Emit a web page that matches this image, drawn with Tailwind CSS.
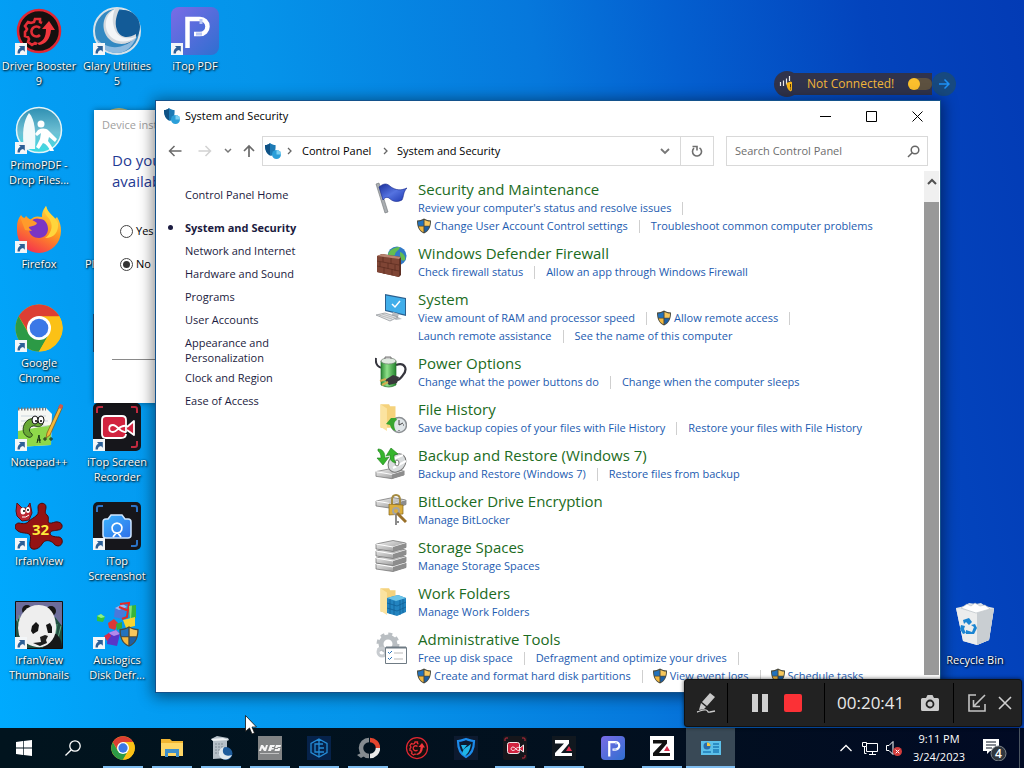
<!DOCTYPE html>
<html lang="en">
<head>
<meta charset="utf-8">
<title>System and Security</title>
<script src="https://cdn.jsdelivr.net/npm/@tailwindcss/browser@4"></script>
</head>
<body class="relative h-screen overflow-hidden bg-[linear-gradient(80deg,#00abff_0%,#039df3_13%,#0594ea_33%,#0678dc_57%,#0460d0_69%,#0344bd_86%,#033bb5_100%)] font-['Open_Sans','Noto_Sans',sans-serif] text-[11px] text-black select-none">

<svg width="0" height="0" class="absolute" aria-hidden="true">
  <defs>
    <linearGradient id="gp" x1="0" y1="0" x2="1" y2="1"><stop offset="0" stop-color="#7a6be6"/><stop offset="1" stop-color="#2f6fd0"/></linearGradient>
    <linearGradient id="gff" x1=".8" y1="0" x2=".3" y2="1"><stop offset="0" stop-color="#ffe14a"/><stop offset=".45" stop-color="#ff9a1f"/><stop offset="1" stop-color="#f5304f"/></linearGradient>
    <linearGradient id="gprimo" x1="0" y1="0" x2="0" y2="1"><stop offset="0" stop-color="#2e8fb2"/><stop offset=".55" stop-color="#6fc0d4"/><stop offset="1" stop-color="#37dce4"/></linearGradient>
    <linearGradient id="gmetal" x1="0" y1="0" x2="1" y2="1"><stop offset="0" stop-color="#f4f4f4"/><stop offset="1" stop-color="#8b8b8b"/></linearGradient>
    <linearGradient id="gflag" x1="0" y1="0" x2="1" y2="1"><stop offset="0" stop-color="#1a2f9a"/><stop offset=".5" stop-color="#5573e0"/><stop offset="1" stop-color="#1c37b0"/></linearGradient>
    <linearGradient id="gbat" x1="0" y1="0" x2="1" y2="0"><stop offset="0" stop-color="#2c8a34"/><stop offset=".4" stop-color="#8fe08a"/><stop offset="1" stop-color="#23852c"/></linearGradient>
    <linearGradient id="gcam" x1="0" y1="0" x2="1" y2="1"><stop offset="0" stop-color="#3ab4ff"/><stop offset="1" stop-color="#2f6fe8"/></linearGradient>
    <symbol id="shortcut" viewBox="0 0 12 12"><path d="M0 0h12v12H0z" fill="#f3f6f8"/><path d="M2.500 10.500c0-3.500 1-5 3-5.800L4 3h5.800v5.800L8 7C6 7.300 5 8.500 4.800 10.500z" fill="#2c5f96"/></symbol>
    <symbol id="shield" viewBox="0 0 16 16"><path d="M8 .5C6 1.800 3.500 2.500 1 2.500c0 6 1.500 10.500 7 13 5.500-2.500 7-7 7-13-2.500 0-5-.7-7-2z" fill="#4a4a3c"/><path d="M7.500 1.900C6 2.800 4 3.400 2 3.500c0 1.600.1 3 .5 4.300h5z" fill="#2272bd"/><path d="M8.500 1.900c1.500.9 3.500 1.500 5.500 1.600 0 1.600-.1 3-.5 4.300h-5z" fill="#f7c75c"/><path d="M2.700 8.500c.7 2.600 2.200 4.500 4.800 5.800V8.500z" fill="#f3b83f"/><path d="M13.300 8.500c-.7 2.600-2.200 4.500-4.800 5.800V8.500z" fill="#1c5fa6"/></symbol>
    <symbol id="chrome" viewBox="0 0 48 48"><circle cx="24" cy="24" r="23.500" fill="#fbc116"/><path d="M24 24 3.650 12.250A23.500 23.500 0 0 1 44.350 12.250z" fill="#dc3f33"/><path d="M24 12.200h20.400L40 9 24 .5 3.650 12.250 14 29z" fill="#dc3f33"/><path d="M3.650 12.250A23.500 23.500 0 0 0 24 47.500L34 30 24 24 13.800 29.800z" fill="#2c9a46"/><path d="M24 47.500A23.500 23.500 0 0 0 44.400 12.200H24L34.200 30z" fill="#fbc116"/><circle cx="24" cy="24" r="12" fill="#fff"/><circle cx="24" cy="24" r="9.300" fill="#3b78e7"/></symbol>
    <symbol id="gear" viewBox="0 0 48 48"><circle cx="24" cy="24" r="21" fill="#15100f" stroke="#e02733" stroke-width="2.500"/><path d="M27 16l-2-1 0-3h-5l-1 3-3 1-3-1-3 4 2 3-1 2-1 1v4l3 1 1 2-1 3 4 3 3-2 2 1" fill="none" stroke="#e32d36" stroke-width="2.600"/><path d="M25 21a5 5 0 1 0 0 7" fill="none" stroke="#e32d36" stroke-width="2.600"/><path d="M22 36c6-1 9-6 9-14h-4l7-8 6 9h-4c-1 9-5 14-12 15z" fill="#f2363d"/></symbol>
    <symbol id="pdf" viewBox="0 0 48 48"><rect width="48" height="48" rx="8" fill="url(#gp)"/><path d="M16.500 41V12H29a7.500 7.500 0 0 1 0 15H23" fill="none" stroke="#fff" stroke-width="4.500"/><path d="M31 27h-6M30 12v5" stroke="#b9c8f4" stroke-width="3"/></symbol>
    <symbol id="camrec" viewBox="0 0 48 48"><rect width="48" height="48" rx="5" fill="#16161b"/><path d="M4 10V6q0-2 2-2h4M38 4h4q2 0 2 2v4M44 38v4q0 2-2 2h-4" fill="none" stroke="#c32b40" stroke-width="2"/><path d="m34 24 7-6v14l-7-5" fill="#d2233f" stroke="#fff" stroke-width="1.800" stroke-linejoin="round"/><path d="M33 29.500V17q0-4-4-4H13q-4 0-4 4v14q0 4 4 4h15q5 0 5-4" fill="#d2233f" stroke="#fff" stroke-width="1.800"/><path d="M33 29c-7 1-8-7-13-7-5 0-5 7 0 7s6-8 14-6" fill="none" stroke="#fff" stroke-width="1.800"/></symbol>
    <symbol id="sec" viewBox="0 0 16 16"><path d="M0 2c2 0 4-.5 5-2 2 1.500 3.500 2 5.500 2 .5 5-1 9-4.500 11C2 11 0 8 0 2z" fill="#1c7ab5"/><path d="M0 2c2 0 4-.5 5-2v12.500C2 11 0 8 0 2z" fill="#0f5285"/><circle cx="11.500" cy="11.500" r="4.500" fill="#2b9fd9"/><path d="M11.500 7v4.500H16A4.500 4.500 0 0 0 11.500 7z" fill="#7bd0f2"/></symbol>
    <symbol id="drive" viewBox="0 0 32 12"><path d="M1 4 18 .5l13 2.500v4.500L18 11.500 1 9z" fill="url(#gmetal)" stroke="#6b6b6b" stroke-width=".7"/><path d="m1 4 17 3 13-4" fill="none" stroke="#fff"/><path d="M18 7v4.500l13-4V3z" fill="#8d8d8d"/></symbol>
    <symbol id="folder" viewBox="0 0 18 28"><path d="M2 2h8l1 2h5v20H2z" fill="#f5d27c"/><path d="m2 2 6 4v21l-6-4z" fill="#fbe3a0"/></symbol>
    <symbol id="zlogo" viewBox="0 0 24 24"><path d="M3 4h14v3.500L9 17h11v3H3v-3l9-9.500H3z" fill="currentColor"/><path d="m14 15 3-5 3 5z" fill="#d92d4b"/></symbol>
  </defs>
</svg>

<!-- Desktop shortcuts -->
<main class="grid w-max auto-cols-[78px] grid-flow-col grid-rows-[repeat(7,99px)] pt-[7px] text-center leading-[15px] text-white [&_span]:[text-shadow:1px_1px_2px_#000,0_0_2px_#000a]">
  <button class="flex flex-col items-center gap-[3px]">
    <svg class="size-12" viewBox="0 0 48 48"><use href="#gear" width="48" height="48"/><use href="#shortcut" y="36" width="12" height="12"/></svg>
    <span class="whitespace-nowrap">Driver Booster<br>9</span></button>
  <button class="flex flex-col items-center gap-[3px]">
    <svg class="size-12" viewBox="0 0 48 48"><circle cx="24" cy="24" r="22.500" fill="url(#gprimo)" stroke="#e3f4f8" stroke-width="1.500"/><path d="M14 7c6 6 7 20 6 36H9C7 28 8 15 14 7z" fill="#f2fafb"/><circle cx="26" cy="18" r="3.500" fill="#fff"/><path d="M23 24c4-2 8-2 11 1l8 8-2 3-6-5-1 4c3 4 5 7 6 10h-4c-1-4-4-7-7-8l-4 6-3-2 4-8 1-6-4 3-2-2z" fill="#fff"/><use href="#shortcut" y="36" width="12" height="12"/></svg>
    <span class="whitespace-nowrap">PrimoPDF -<br>Drop Files...</span></button>
  <button class="flex flex-col items-center gap-[3px]">
    <svg class="size-12" viewBox="0 0 48 48"><path d="M2 22c0-5 1-8 4-12l3 4 2-3 4 4c4-4 7-4 12-3 0-5 1-7 4-11 1 6 5 8 8 14l3-3c3 5 4 9 4 14a22 22 0 0 1-44 0z" fill="url(#gff)"/><path d="M14 24c0-8 5-12 11-10 5 0 8 5 8 10s-4 9-9 9-10-3-10-9z" fill="#7a35c4"/><path d="M5 12c6 1 10 1 17 6-1 3-5 3-9 4l4 4-7-1z" fill="#ff9b2b"/><path d="M31 1c-4 7 1 9 4 14 4 7 0 15-5 18 9 0 14-6 13-15-2-6-10-9-12-17z" fill="#ffd53c"/><use href="#shortcut" y="36" width="12" height="12"/></svg>
    <span>Firefox</span></button>
  <button class="flex flex-col items-center gap-[3px]">
    <svg class="size-12" viewBox="0 0 48 48"><use href="#chrome" width="48" height="48"/><use href="#shortcut" y="36" width="12" height="12"/></svg>
    <span>Google<br>Chrome</span></button>
  <button class="flex flex-col items-center gap-[3px]">
    <svg class="size-12" viewBox="0 0 48 48"><path d="m3 6 28-1 6 6-1 31-33 2z" fill="#f7f8f4"/><path d="m3 28 33-6v20L3 44z" fill="#8ed84a"/><path d="M3 6h28" stroke="#777" stroke-width="3" stroke-dasharray="1.500 1.500"/><path d="M6 13h25M6 18h27M6 23h27" stroke="#b7c7d4" stroke-width=".7"/><path d="M28 21c-2-5-10-7-15-4-6 4-7 14 0 17 3 1 5-1 4-3-5-3-2-9 3-8 3 1 6 1 8-2z" fill="#69a936" stroke="#26431a"/><ellipse cx="20" cy="17" rx="3" ry="4" fill="#fff" stroke="#111"/><ellipse cx="26" cy="17" rx="3" ry="4" fill="#fff" stroke="#111"/><circle cx="21" cy="18" r="1"/><circle cx="26" cy="18" r="1"/><path d="m22 40 2-8 1 8m-3-3h4m2-1h4m-2-2v4m4-2h4m-2-2v4" fill="none" stroke="#153018"/><path d="m45 2 3 1-13 29-4 3 1-5z" fill="#f1b93c" stroke="#815014" stroke-width=".7"/><path d="m43 5 4 1 1-4-3-1z" fill="#cc5a52"/><use href="#shortcut" y="36" width="12" height="12"/></svg>
    <span>Notepad++</span></button>
  <button class="flex flex-col items-center gap-[3px]">
    <svg class="size-12" viewBox="0 0 48 48"><path d="M22 13c2-2 1-5 1-8 0-5 8-5 8 0 0 3-2 6 1 8 3 3 0 6 2 8 3 1 6-2 9-1 6 1 5 8 0 8-3 1-7 0-8 3 0 3 4 4 9 4 5 1 4 9-1 9-4 0-4-4-8-5s-6 0-8 3c-2 4-8 7-11 4-3-4 1-9-1-13-2-3-8-1-12-4-5-3-3-8 1-8 4 1 8 1 10-2 2-2 5-3 8-6z" fill="#941313" stroke="#4c0808"/><path d="m2 1 5 5 5 0 3-5 2 10-3 7-7 1-5-5-1-5z" fill="#bb2430" stroke="#5e1013"/><ellipse cx="8" cy="9" rx="2.500" ry="3.500" fill="#fff"/><ellipse cx="13" cy="8" rx="2" ry="3" fill="#fff"/><circle cx="9" cy="9" r="1"/><circle cx="13" cy="8" r="1"/><path d="M7 15q4 1 7-2" stroke="#fff" fill="none"/><text x="17" y="33" font-size="15" font-weight="700" fill="#ffec3b" font-family="Open Sans">32</text><use href="#shortcut" y="36" width="12" height="12"/></svg>
    <span>IrfanView</span></button>
  <button class="flex flex-col items-center gap-[3px]">
    <svg class="size-12" viewBox="0 0 48 48"><path d="M.5.500h47v47H.5z" fill="#6d6d9b" stroke="#111"/><path d="M1 20 8 14l6 6 26-4 7 9v22H1z" fill="#1f4d40"/><path d="m2 18 5 13M4 14l3 20M42 23l-3 20M46 25l-5 20" stroke="#66a886"/><circle cx="12" cy="9" r="5" fill="#171717"/><circle cx="36" cy="10" r="5" fill="#171717"/><path d="M30 34c7-6 17-1 17 13H28z" fill="#16181a"/><path d="M3 27C4 12 12 4 24 4c11 0 16 9 17 20 1 12-6 20-14 22-9 1-20-4-23-12z" fill="#eee"/><path d="m17 25 4-4 3 3-1 6-5 3-2-3zM31 24l4-2 2 4 0 6-4 0z" fill="#141414"/><path d="m25 36 5-2 3 1-2 4 1 3-7 3-7-3 8-1z" fill="#1e1e1e"/><use href="#shortcut" y="36" width="12" height="12"/></svg>
    <span>IrfanView<br>Thumbnails</span></button>

  <button class="flex flex-col items-center gap-[3px]">
    <svg class="size-12" viewBox="0 0 48 48"><circle cx="24" cy="24" r="23" fill="#3389c2" stroke="#d7e2e9" stroke-width="2"/><circle cx="30" cy="20" r="17" fill="#135b97"/><path d="M3 31c10 12 28 13 41-2-5 12-12 17-20 17S7 42 3 31z" fill="#8fbbe0"/><path d="M27 1C12 2 8 16 12 26c5 12 20 15 31 5l0-4c-8 5-16 4-19-4-3-8 0-16 3-22z" fill="#d4d9de"/><path d="M22 2C10 9 11 23 18 30c7 6 17 6 25 0-9 3-18 1-21-7-3-7-3-14 0-21z" fill="#f4f6f8"/><use href="#shortcut" y="36" width="12" height="12"/></svg>
    <span class="whitespace-nowrap">Glary Utilities<br>5</span></button>
  <span class="flex flex-col items-center"><svg class="size-12" viewBox="0 0 48 48"><circle cx="26" cy="22" r="20" fill="#b8b87a"/></svg></span>
  <button class="flex flex-col items-start pl-[7px] pt-[51px]"><span>Pl</span></button>
  <span class="flex flex-col items-center"><svg class="size-12" viewBox="0 0 48 48"><path d="M0 10h48v38H0z" fill="#1b4f7d"/></svg></span>
  <button class="flex flex-col items-center gap-[3px]">
    <svg class="size-12" viewBox="0 0 48 48"><use href="#camrec" width="48" height="48"/><use href="#shortcut" y="36" width="12" height="12"/></svg>
    <span>iTop Screen<br>Recorder</span></button>
  <button class="flex flex-col items-center gap-[3px]">
    <svg class="size-12" viewBox="0 0 48 48"><rect width="48" height="48" rx="5" fill="#16161b"/><path d="M4 10V6q0-2 2-2h4M38 4h4q2 0 2 2v4M44 38v4q0 2-2 2h-4" fill="none" stroke="#2c74c8" stroke-width="2"/><path d="M15 17l3-4h11l3 4h3q3 0 3 3v13q0 3-3 3H13q-3 0-3-3V20q0-3 3-3z" fill="url(#gcam)" stroke="#cfe6ff" stroke-width="1.500"/><path d="m20 35 3-4a5 5 0 1 1 2 0l3 4" fill="none" stroke="#fff" stroke-width="1.800"/><use href="#shortcut" y="36" width="12" height="12"/></svg>
    <span>iTop<br>Screenshot</span></button>
  <button class="flex flex-col items-center gap-[3px]">
    <svg class="size-12" viewBox="0 0 48 48"><path d="m4 15 4-2 4 3-2 5-6-1z" fill="#35c43b"/><path d="m4 15 4-2 4 3-4 1z" fill="#8ff08a"/><path d="m22 7 8-4 4 3-4 12-9-2z" fill="#4a79d9"/><path d="m22 7 8-4 4 3-8 3z" fill="#9ab8f5"/><path d="m27 3 9-1-2 14-5 2M26 6l10 4" fill="none" stroke="#e02a2a" stroke-width="2"/><path d="m36 5 7-1v13l-6 2z" fill="#38b53a"/><path d="m36 5 3-.5-1 14-1 .5z" fill="#7fe077"/><path d="m30 19 12-3v9l-9 2z" fill="#f6d631"/><path d="m15 22 6-4 4 4-3 7-6-2z" fill="#dc3836"/><path d="m23 23 6-2 0 6-5 2z" fill="#39a939"/><path d="m15 32 8-3 4 4-3 12-10-2z" fill="#5a35c8"/><path d="m15 32 8-3 4 4-6 2z" fill="#b28aec"/><path d="m11 35 5-3 2 3-4 5z" fill="#d82b48"/><use href="#shield" x="25" y="24" width="22" height="23"/><use href="#shortcut" y="36" width="12" height="12"/></svg>
    <span class="whitespace-nowrap">Auslogics<br>Disk Defr...</span></button>

  <button class="flex flex-col items-center gap-[3px]">
    <svg class="size-12" viewBox="0 0 48 48"><use href="#pdf" width="48" height="48"/><use href="#shortcut" y="36" width="12" height="12"/></svg>
    <span>iTop PDF</span></button>
</main>
<button class="absolute right-[10px] top-[601px] flex w-[78px] flex-col items-center gap-[3px] leading-[15px] whitespace-nowrap text-white [text-shadow:1px_1px_2px_#000,0_0_2px_#000a]">
  <svg class="size-12" viewBox="0 0 48 48"><path d="m5 7 9-2 4-3 7 1 5-1 4 3 9 2-5 32-12 5-14-4z" fill="#dfe4e8"/><path d="m5 7 20 5 18-5-5 32-12 5-14-4z" fill="#eceded"/><path d="m26 12 17-5-5 32-12 5z" fill="#c9ced2"/><path d="m10 7 6-4 4 2 4-3 5 3 5-1 5 4-14 4z" fill="#fff" stroke="#b4bac0" stroke-width=".6"/><g fill="#1b85d2"><path d="m12 19 6-2 3 4-3 3-3-3-2 2z"/><path d="m10 24 4 1-1 3 2 4-3 1-3-5z"/><path d="m15 29 6 2 2-5-3-2 4-1 2 4-3 6-8 0z"/></g></svg>
  <span>Recycle Bin</span>
</button>

<!-- Background dialog -->
<section class="absolute left-[94px] top-[110px] h-[293px] w-[110px] bg-white whitespace-nowrap shadow-[0_0_6px_#0006]">
  <h2 class="pl-2 pt-[7px] leading-4 text-[#a0a0a0]">Device inst</h2>
  <p class="pl-[18px] pt-[17px] text-[15px] leading-[21px] text-[#1f3a93]">Do you<br>available</p>
  <div class="flex flex-col gap-[17px] pl-[26px] pt-[31px] leading-4">
    <label class="flex items-center gap-[3px]"><input type="radio" name="dl" class="size-[13px] appearance-none rounded-full border border-[#444] bg-white">Yes</label>
    <label class="flex items-center gap-[3px]"><input type="radio" name="dl" checked class="size-[13px] appearance-none rounded-full border border-[#444] bg-[#333] bg-clip-content p-[2px]">No</label>
  </div>
  <hr class="ml-[18px] mt-[87px] border-[#8a8a8a]">
</section>

<!-- VPN status pill -->
<aside class="absolute right-[68px] top-[71px] flex h-[26px] w-[182px] items-center text-xs text-[#f2b63a]">
  <span class="flex size-[26px] items-center justify-center rounded-full bg-[#30334c]"><svg class="size-4" viewBox="0 0 16 16"><path d="M1.500 6v4M4.500 4.500v5.500M7.500 2.500v6M10.500 0v5" stroke="#e8e8e8" stroke-width="1.200"/><path d="m11.500 5.500 4 1.500c0 4-1 6.500-4 8.500-3-2-4-4.500-4-8.500z" fill="#f7b418"/><path d="M11.500 8v3.500m0 1v1" stroke="#5a3c00"/></svg></span>
  <div class="-ml-2 flex h-[22px] flex-1 items-center justify-between bg-[#30334c] pl-[15px]"><span class="whitespace-nowrap">Not Connected!</span>
  <button role="switch" aria-checked="false" aria-label="VPN" class="flex h-3 w-6 items-center rounded-full bg-[#5d5140]"><span class="size-3 rounded-full bg-[#fbc02d]"></span></button></div>
  <button aria-label="Expand" class="flex size-[24px] items-center justify-center rounded-full bg-[#17497f]"><svg class="size-3" viewBox="0 0 12 12" fill="none" stroke="#1e90f5" stroke-width="1.500"><path d="M1 6h10M6.500 1.500 11 6l-4.500 4.500"/></svg></button>
</aside>

<!-- Control Panel window -->
<section class="absolute left-[155px] right-[83px] top-[100px] flex h-[593px] flex-col border border-[#14528c] bg-white shadow-[0_2px_14px_2px_#0007]">
  <header class="flex h-[30px] shrink-0 items-center pl-2">
    <svg class="size-4"><use href="#sec"/></svg><h1 class="pl-[5px]">System and Security</h1>
    <div class="ml-auto flex h-[28px]">
      <button aria-label="Minimize" class="flex w-[46px] items-center justify-center"><svg class="h-[11px] w-[11px]" viewBox="0 0 11 11"><path d="M0 5.500h11" stroke="#000"/></svg></button>
      <button aria-label="Maximize" class="flex w-[46px] items-center justify-center"><svg class="h-[11px] w-[11px]" viewBox="0 0 11 11"><path d="M.5.500h10v10H.5z" fill="none" stroke="#000"/></svg></button>
      <button aria-label="Close" class="flex w-[46px] items-center justify-center"><svg class="h-[11px] w-[11px]" viewBox="0 0 11 11"><path d="m.5.500 10 10m0-10-10 10" stroke="#000"/></svg></button>
    </div>
  </header>
  <nav class="flex h-10 shrink-0 items-center pr-3">
    <div class="flex w-[106px] items-center pl-[12px]">
      <button aria-label="Back"><svg class="h-4 w-[14px]" viewBox="0 0 14 16" fill="none" stroke="#6a6a6a" stroke-width="1.500"><path d="M13.500 8H1.500M6.500 3l-5 5 5 5"/></svg></button>
      <button aria-label="Forward" class="ml-[16px]"><svg class="h-4 w-[14px]" viewBox="0 0 14 16" fill="none" stroke="#d2d2d2" stroke-width="1.500"><path d="M.5 8h12M7.500 3l5 5-5 5"/></svg></button>
      <button aria-label="Recent" class="ml-[12px]"><svg class="h-4 w-2" viewBox="0 0 8 16" fill="none" stroke="#777" stroke-width="1.500"><path d="m1 6 3 3 3-3"/></svg></button>
      <button aria-label="Up" class="ml-[11px]"><svg class="h-4 w-3" viewBox="0 0 12 16" fill="none" stroke="#6a6a6a" stroke-width="1.700"><path d="M6 14V3M1 8l5-5 5 5"/></svg></button>
    </div>
    <div class="flex h-[30px] flex-1 items-center border border-[#d9d9d9] pl-[2px] whitespace-nowrap">
      <svg class="size-4"><use href="#sec"/></svg>
      <svg class="ml-[6px] h-2 w-[6px]" viewBox="0 0 6 8" fill="none" stroke="#666" stroke-width="1.300"><path d="m1 1 3 3-3 3"/></svg>
      <a href="#" class="ml-[9px] w-[72px]">Control Panel</a>
      <svg class="ml-[9px] h-2 w-[6px]" viewBox="0 0 6 8" fill="none" stroke="#666" stroke-width="1.300"><path d="m1 1 3 3-3 3"/></svg>
      <a href="#" class="ml-[8px]">System and Security</a>
      <button aria-label="Previous locations" class="ml-auto mr-[10px]"><svg class="h-4 w-[10px]" viewBox="0 0 10 16" fill="none" stroke="#777" stroke-width="1.800"><path d="m1 6 4 4 4-4"/></svg></button>
      <button aria-label="Refresh" class="flex h-full w-[33px] items-center justify-center border-l border-[#d9d9d9]"><svg class="size-3" viewBox="0 0 12 12" fill="none" stroke="#6f6f6f" stroke-width="1.600"><path d="M8.500 2.800A4.500 4.500 0 1 1 3 3.200M1.500 1.500H6v4"/></svg></button>
    </div>
    <div class="ml-3 flex h-[30px] w-[202px] items-center border border-[#d9d9d9] pl-2 pr-[7px]">
      <input type="search" aria-label="Search Control Panel" placeholder="Search Control Panel" class="min-w-0 flex-1 outline-none placeholder:text-[#6d6d6d]">
      <svg class="size-[13px]" viewBox="0 0 13 13" fill="none" stroke="#666" stroke-width="1.500"><circle cx="8" cy="5" r="3.800"/><path d="M5.200 7.800 1 12"/></svg>
    </div>
  </nav>
  <div class="flex min-h-0 flex-1">
    <aside class="flex w-[219px] shrink-0 flex-col items-start gap-2 pl-[29px] pt-4 leading-[15px] text-[#1b1b40]">
      <a href="#">Control Panel Home</a>
      <a href="#" class="-ml-[17px] mt-[10px] flex items-center gap-[12px] font-bold whitespace-nowrap"><span class="size-[5px] rounded-full bg-[#1b1b40]"></span>System and Security</a>
      <a href="#">Network and Internet</a>
      <a href="#">Hardware and Sound</a>
      <a href="#">Programs</a>
      <a href="#">User Accounts</a>
      <a href="#">Appearance and<br>Personalization</a>
      <a href="#" class="-mt-[3px]">Clock and Region</a>
      <a href="#">Ease of Access</a>
    </aside>
    <div class="flex min-w-0 flex-1 flex-col gap-[10px] overflow-hidden pt-[10px] leading-[18px] whitespace-nowrap text-[#1c5bb0] [&_h2]:pb-[2px] [&_h2]:text-[15px] [&_h2]:leading-4 [&_h2]:text-[#1c6b22] [&_i]:mx-[11px] [&_i]:h-[13px] [&_i]:w-px [&_i]:bg-[#cfcfcf] [&_p]:flex [&_p]:items-center [&>article]:flex [&>article]:gap-[11px] [&>article>svg]:mt-px [&>article>svg]:size-8 [&>article>svg]:shrink-0">
      <article>
        <svg viewBox="0 0 32 32"><path d="m1 2 3-1 9 29-3 1z" fill="#a9adb1" stroke="#6e7377" stroke-width=".6"/><path d="M4 5c5-4 8-4 12 0 5 3 9 4 16 1-4 4-3 8-5 12-6 3-10 1-13-2-2-1-4-1-6 2z" fill="url(#gflag)" stroke="#14258a" stroke-width=".6"/></svg>
        <div><h2>Security and Maintenance</h2>
        <p><a href="#">Review your computer's status and resolve issues</a><i></i></p>
        <p><svg class="-ml-[2px] mr-[2px] size-4"><use href="#shield"/></svg><a href="#">Change User Account Control settings</a><i></i><a href="#">Troubleshoot common computer problems</a></p></div>
      </article>
      <article>
        <svg viewBox="0 0 32 32"><circle cx="22" cy="10" r="9.500" fill="#3179c7"/><path d="M14 6c3-4 8-5 11-5-1 4-5 4-5 8-3 2-6 1-7-1zM25 6c3 1 6 4 5 8-4 2-5-2-5-8z" fill="#63bd50"/><path d="m2 10 5-2 19 3v18l-2 2-22-5z" fill="#5e3024"/><path d="m2 10 22 3v18L2 26z" fill="#7f4535"/><path d="m2 15 22 4M2 20l22 5M8 11v5m8-4v6M5 16v5m8-4v6m7-4v6M9 21v7m8-5v6" stroke="#5e2f22" stroke-width=".8"/><path d="m2 10 5-2 19 3-2 2z" fill="#b98470"/></svg>
        <div><h2>Windows Defender Firewall</h2>
        <p><a href="#">Check firewall status</a><i></i><a href="#">Allow an app through Windows Firewall</a></p></div>
      </article>
      <article>
        <svg viewBox="0 0 32 32"><path d="m10 2 21 4v18l-21-5z" fill="#2b5f8e"/><path d="m11 3.500 19 3.500v15.500l-19-4.500z" fill="#41aeea"/><path d="m17 12 3 3 5-6" stroke="#fff" stroke-width="1.500" fill="none"/><path d="m18 20 6 2-1 3 4 2-6 1-5-3z" fill="#b8bcc0"/><path d="m1 23 9-2 13 4-8 4z" fill="#e2e4e6" stroke="#8b8f93" stroke-width=".7"/><path d="m4 23 13 4m-10-5 13 4" stroke="#aaa" stroke-width=".7"/></svg>
        <div><h2>System</h2>
        <p><a href="#">View amount of RAM and processor speed</a><i></i><svg class="-ml-[2px] mr-[2px] size-4"><use href="#shield"/></svg><a href="#">Allow remote access</a><i></i></p>
        <p><a href="#">Launch remote assistance</a><i></i><a href="#">See the name of this computer</a></p></div>
      </article>
      <article>
        <svg viewBox="0 0 32 32"><path d="M1 2c-1 7 3 10 7 10" fill="none" stroke="#35353d" stroke-width="2"/><path d="M21 9c9-3 12 4 7 10-2 3-3 5-8 6" fill="none" stroke="#35353d" stroke-width="2.200"/><path d="M6 5h15v24q-7 4-15 0z" fill="url(#gbat)" stroke="#256e2b" stroke-width=".7"/><ellipse cx="13.500" cy="5" rx="7.500" ry="3" fill="#dfe9df" stroke="#718071" stroke-width=".7"/><path d="M10 3V1h6v2" fill="#ccc" stroke="#777"/><path d="m10 24 8-5 6 2-2 6-8 2z" fill="#39393b"/><path d="m5 25 6-2m-4 6 6-3" stroke="#d6ad51" stroke-width="2"/></svg>
        <div><h2>Power Options</h2>
        <p><a href="#">Change what the power buttons do</a><i></i><a href="#">Change when the computer sleeps</a></p></div>
      </article>
      <article>
        <svg viewBox="0 0 32 32"><use href="#folder" x="3" width="20" height="30"/><circle cx="24" cy="23" r="7.500" fill="#dfe5e8" stroke="#8b8f93" stroke-width="1.500"/><path d="M24 18v5l4-2M18 23h1m9 0h1m-5 5v1" stroke="#444" fill="none"/><path d="m11 22 5-6 5 0 1 2c-3 1-4 6-1 11-4-1-5-3-6-6z" fill="#38a52f"/></svg>
        <div><h2>File History</h2>
        <p><a href="#">Save backup copies of your files with File History</a><i></i><a href="#">Restore your files with File History</a></p></div>
      </article>
      <article>
        <svg viewBox="0 0 32 32"><use href="#drive" y="19" width="30" height="13"/><ellipse cx="22" cy="15" rx="8" ry="10" transform="rotate(42 22 15)" fill="#d9dcdd" stroke="#777"/><path d="m16 12 12-5M18 20l13-7" stroke="#fff" stroke-width="2"/><ellipse cx="22" cy="15" rx="2" ry="3" fill="#fff" stroke="#777"/><path d="M3 1c5 0 7 4 7 9l4-1-6 8-6-7h4C6 7 5 4 3 3zM16 0l7 6-4 1c0 3 0 6 2 8-5-1-6-3-6-8l-4 1z" fill="#35b52c" stroke="#1d7d1b" stroke-width=".6"/></svg>
        <div><h2>Backup and Restore (Windows 7)</h2>
        <p><a href="#">Backup and Restore (Windows 7)</a><i></i><a href="#">Restore files from backup</a></p></div>
      </article>
      <article>
        <svg viewBox="0 0 32 32"><use href="#drive" y="2" width="32" height="14"/><path d="M17 11V6q0-5 4-5t4 5v5" fill="none" stroke="#a58b42" stroke-width="2"/><path d="m14 10 14 1v9l-14 1z" fill="#dcae3c" stroke="#82641d" stroke-width=".7"/><circle cx="21" cy="17" r="3" fill="none" stroke="#a4a4a4" stroke-width="2"/><path d="M21 20v11m0-3h3" stroke="#8c8c8c" stroke-width="2"/><path d="m22 19 9 9" stroke="#997029" stroke-width="3"/></svg>
        <div><h2>BitLocker Drive Encryption</h2>
        <p><a href="#">Manage BitLocker</a></p></div>
      </article>
      <article>
        <svg viewBox="0 0 32 32"><use href="#drive" y="20" width="32" height="12"/><use href="#drive" y="14" width="32" height="12"/><use href="#drive" y="7" width="32" height="12"/><use href="#drive" y="0" width="32" height="12"/></svg>
        <div><h2>Storage Spaces</h2>
        <p><a href="#">Manage Storage Spaces</a></p></div>
      </article>
      <article>
        <svg viewBox="0 0 32 32"><use href="#folder" x="3" width="20" height="30"/><path d="m12 12 11-3 8 3v14l-9 4-10-3z" fill="#2384c0"/><path d="m12 12 11-3 8 3-10 3z" fill="#6cc4e8"/><path d="m12 17 10 3 9-4M12 22l10 3 9-4M15 13v15m4-13v14m6-15v15m3-16v14" stroke="#0e5d94" fill="none" stroke-width=".7"/></svg>
        <div><h2>Work Folders</h2>
        <p><a href="#">Manage Work Folders</a></p></div>
      </article>
      <article>
        <svg viewBox="0 0 32 32"><circle cx="13" cy="12" r="7" fill="none" stroke="#b9bec2" stroke-width="5"/><circle cx="13" cy="12" r="10" fill="none" stroke="#b9bec2" stroke-width="3" stroke-dasharray="4 3.850"/><circle cx="7" cy="20" r="4" fill="none" stroke="#c8ccd0" stroke-width="3"/><path d="M10.500 15.500h21v16h-21z" fill="#fff" stroke="#6f7b84"/><path d="M11 15.500h20" stroke="#6f7b84" stroke-width="2"/><path d="m13 20 1.500 1.500L17 19m-4 7 1.500 1.500L17 25" stroke="#2a73b8" fill="none"/><path d="M19 21h9m-9 6h9" stroke="#bbb"/></svg>
        <div><h2>Administrative Tools</h2>
        <p><a href="#">Free up disk space</a><i></i><a href="#">Defragment and optimize your drives</a><i></i></p>
        <p><svg class="-ml-[2px] mr-[2px] size-4"><use href="#shield"/></svg><a href="#">Create and format hard disk partitions</a><i></i><svg class="-ml-[2px] mr-[2px] size-4"><use href="#shield"/></svg><a href="#">View event logs</a><i></i><svg class="-ml-[2px] mr-[2px] size-4"><use href="#shield"/></svg><a href="#">Schedule tasks</a></p></div>
      </article>
    </div>
    <div class="mb-[17px] mr-px flex w-[15px] flex-col bg-[#f0f0f0]">
      <button aria-label="Scroll up" class="flex h-[22px] items-center justify-center"><svg class="h-2 w-[10px]" viewBox="0 0 10 8" fill="none" stroke="#505050" stroke-width="2"><path d="m1 6 4-4 4 4"/></svg></button>
      <div class="mt-[9px] flex-1 bg-[#999]"></div>
    </div>
  </div>
</section>

<!-- Taskbar -->
<footer class="absolute inset-x-0 bottom-0 flex h-10 bg-[linear-gradient(to_right,#01141e,#02101f_60%,#010a24)] text-white">
  <button aria-label="Start" class="flex w-12 items-center justify-center"><svg class="size-4" viewBox="0 0 16 16" fill="#fff"><path d="m0 2 7-1v6.600H0zM7.700.900 16 0v7.600H7.700zM0 8.400h7V15l-7-1zM7.700 8.400H16V16l-8.300-1z"/></svg></button>
  <button aria-label="Search" class="flex w-[50px] items-center justify-center"><svg class="size-4" viewBox="0 0 16 16" fill="none" stroke="#fff" stroke-width="1.300"><circle cx="10" cy="6" r="5.200"/><path d="M6.300 9.700.5 15.500"/></svg></button>
  <div class="flex [&>button]:flex [&>button]:w-[49px] [&>button]:flex-col [&>button]:items-center [&>button]:pt-2 [&_svg]:size-6 [&_u]:mt-[6px] [&_u]:h-[2px] [&_u]:w-10 [&_u]:bg-[#7fbdf0]">
    <button aria-label="Chrome"><svg><use href="#chrome"/></svg><u></u></button>
    <button aria-label="File Explorer"><svg viewBox="0 0 24 24"><path d="M1 3h9l2 2h11v15H1z" fill="#f2b632"/><path d="M1 7h22v13H1z" fill="#ffd766"/><path d="M5 21v-8h14v8h-3v-4H8v4z" fill="#3e8fcb"/></svg><u></u></button>
    <button aria-label="Glary Utilities"><svg viewBox="0 0 24 24"><path d="m2 3 6-3 11 2 1 2-2 1v17l-14 1V5z" fill="#b5bfc7"/><path d="m2 3 12-1 6 2-16 1z" fill="#eef2f4"/><path d="M6 8h9M6 11h9M6 14h9M6 17h7" stroke="#7f8a93" stroke-dasharray="2 1"/><circle cx="17" cy="17.500" r="6.500" fill="#1d5b9b"/><path d="M15 11c-3 5 0 11 8 8-3 6-11 6-13 0-1-4 2-8 5-8z" fill="#dfe8ee"/></svg><u></u></button>
    <button aria-label="NFS"><svg viewBox="0 0 24 24"><path d="M0 0h24v24H0z" fill="#828485"/><path d="m1 15 2-6h2l2 3 1-3h2l-2 6H6l-2-3-1 3zM10 15l2-6h5l-1 2h-2v1h2l-.5 1.500h-2L13 15zM16.500 15l.5-2h3v-1h-3l1-3h5l-.5 2h-3v1h3l-1 3z" fill="#f5f5f5"/><path d="M2 17.500h19" stroke="#ddd" stroke-width=".7"/></svg><u></u></button>
    <button aria-label="Deepcool"><svg viewBox="0 0 24 24"><path d="M0 0h24v24H0z" fill="#06224a"/><path d="m12 3 8 4.500v9L12 21l-8-4.500v-9zM12 3v18M12 8H8v8h4m0-8h4m-4 4h5m-5 4h5" fill="none" stroke="#248bd6" stroke-width="1.300"/></svg><u></u></button>
    <button aria-label="Disk tool"><svg viewBox="0 0 24 24"><g fill="none" stroke-width="4.500"><path d="M14 4a8 8 0 0 1 8 8" stroke="#e5452e"/><path d="M22 12a8 8 0 0 1-8 8" stroke="#e9e9e9"/><path d="M13 20a8 8 0 0 1 0-16" stroke="#858b90"/></g><path d="m7 16 3 3-5 3-4-3z" fill="#858b90"/></svg><u></u></button>
    <button aria-label="Driver Booster"><svg><use href="#gear"/></svg></button>
    <button aria-label="Advanced Security"><svg viewBox="0 0 24 24"><path d="M0 0h24v24H0z" fill="#0d1a2f"/><path d="M12 3c3 1 5 2 8 2 0 8-2 13-8 16C6 18 4 13 4 5c3 0 5-1 8-2z" fill="none" stroke="#1c8bea" stroke-width="2.200"/><path d="M8 18c1-6 4-6 9-10-1 5-2 9-6 12zM7 9h6l-4 5z" fill="#20b6e8"/></svg></button>
    <button aria-label="Screen Recorder"><svg><use href="#camrec"/></svg><u></u></button>
    <button aria-label="ZD Soft"><svg class="bg-[#11181f] text-white"><use href="#zlogo"/></svg><u></u></button>
    <button aria-label="iTop PDF"><svg><use href="#pdf"/></svg></button>
    <button aria-label="ZD Soft Recorder"><svg class="bg-white text-[#111]"><use href="#zlogo"/></svg><u></u></button>
    <button aria-label="Control Panel" class="bg-[#394956]"><svg viewBox="0 0 24 24"><path d="M2 5h20v14H2z" fill="#5cc0ea"/><circle cx="8" cy="10" r="3.500" fill="#2a6daa"/><path d="M8 6.500V10h3.500A3.500 3.500 0 0 0 8 6.500z" fill="#f5c842"/><path d="M14 8h6m-6 3h6m-6 3h6M4 16h8m2 0h6" stroke="#1d7bb8" stroke-width="1.300"/></svg><u class="w-full!"></u></button>
  </div>
  <div class="ml-auto flex items-center">
    <button aria-label="Hidden icons"><svg class="h-2 w-3" viewBox="0 0 12 8" fill="none" stroke="#fff" stroke-width="1.300"><path d="m.5 7 5.500-5.500L11.500 7"/></svg></button>
    <svg class="ml-[10px] size-4" viewBox="0 0 16 16" fill="none" stroke="#fff"><path d="M4.500 3.500h11v8h-11v-5M.5 2.500h4v4h-4zM2.500 6.500v7h2M10.500 11.500v3M7 14.500h7"/></svg>
    <svg class="ml-[8px] size-4" viewBox="0 0 16 16"><path d="M.5 5.500H3l4-4v13l-4-4H.5z" fill="none" stroke="#fff"/><circle cx="11.500" cy="11.500" r="4.500" fill="#d33b3b"/><path d="m9.700 9.700 3.600 3.600m0-3.600-3.600 3.600" stroke="#fff"/></svg>
    <time class="ml-[7px] w-[60px] text-center leading-[18px] whitespace-nowrap">9:11 PM<br>3/24/2023</time>
    <button aria-label="Notifications" class="ml-[13px]"><svg class="h-[26px] w-[26px]" viewBox="0 0 26 26"><path d="M1 4h16v12H8l-3 3v-3H1z" fill="#fff"/><path d="M4 7h10M4 10h10M4 13h6" stroke="#0a1525"/><circle cx="16.500" cy="18.500" r="7.500" fill="#30373f" stroke="#7e858b"/><text x="13" y="23" font-size="12" font-weight="600" fill="#fff" font-family="Open Sans">4</text></svg></button>
    <span class="ml-[11px] mr-1 h-10 w-px bg-[#4b5560]"></span>
  </div>
</footer>

<!-- Recorder toolbar -->
<section class="absolute bottom-[41px] right-[2px] flex h-12 w-[338px] items-center rounded-[3px] border border-[#111] bg-[#222] shadow-[0_0_4px_#000a]">
  <button aria-label="Draw" class="flex h-10 w-[43px] items-center justify-center border-r border-black"><svg class="size-5" viewBox="0 0 20 20" fill="#c9c9c9"><path d="m14 0 5 4-8 9-5-4zM5 10l5 4-2 2-5 1z"/><path d="M1 19c4-1 6-3 9-2s1 3 4 2l5-1" fill="none" stroke="#c9c9c9" stroke-width="1.300"/></svg></button>
  <div class="flex h-10 w-[97px] items-center gap-4 border-r border-black pl-[24px]">
    <button aria-label="Pause"><svg class="h-[18px] w-4" viewBox="0 0 16 18" fill="#d0d0d0"><path d="M0 0h6v18H0zM10 0h6v18h-6z"/></svg></button>
    <button aria-label="Stop" class="size-[18px] rounded-[2px] bg-[#fb3136]"></button>
  </div>
  <div class="flex h-10 w-[129px] items-center justify-between border-r border-black pl-3 pr-[14px] text-[#e8e8e8]"><span class="text-[17px]">00:20:41</span>
    <button aria-label="Screenshot"><svg class="h-4 w-[18px]" viewBox="0 0 18 16"><path d="M1.500 3H5l1.500-3h5L13 3h3.500Q18 3 18 4.500v10q0 1.500-1.500 1.500h-15Q0 16 0 14.500v-10Q0 3 1.500 3z" fill="#ccc"/><circle cx="9" cy="9" r="3.500" fill="none" stroke="#222" stroke-width="1.800"/></svg></button></div>
  <div class="flex flex-1 items-center justify-end gap-3 pr-[9px]">
    <button aria-label="Collapse"><svg class="size-[18px]" viewBox="0 0 18 18" fill="none" stroke="#c4c4c4" stroke-width="1.600"><path d="M8 1H1v16h16v-7M17 1 6 12M5.500 6v6.500H12"/></svg></button>
    <button aria-label="Close recorder"><svg class="size-[14px]" viewBox="0 0 14 14" stroke="#d0d0d0" stroke-width="1.600"><path d="m1 1 12 12m0-12L1 13"/></svg></button>
  </div>
</section>

<!-- Pointer -->
<svg class="absolute left-[245px] top-[715px] h-5 w-3" viewBox="0 0 12 20"><path d="M.5.500v16l4-3.500 2.500 6 2.500-1L7 12h4.500z" fill="#fff" stroke="#111" stroke-width=".8"/></svg>
</body>
</html>
